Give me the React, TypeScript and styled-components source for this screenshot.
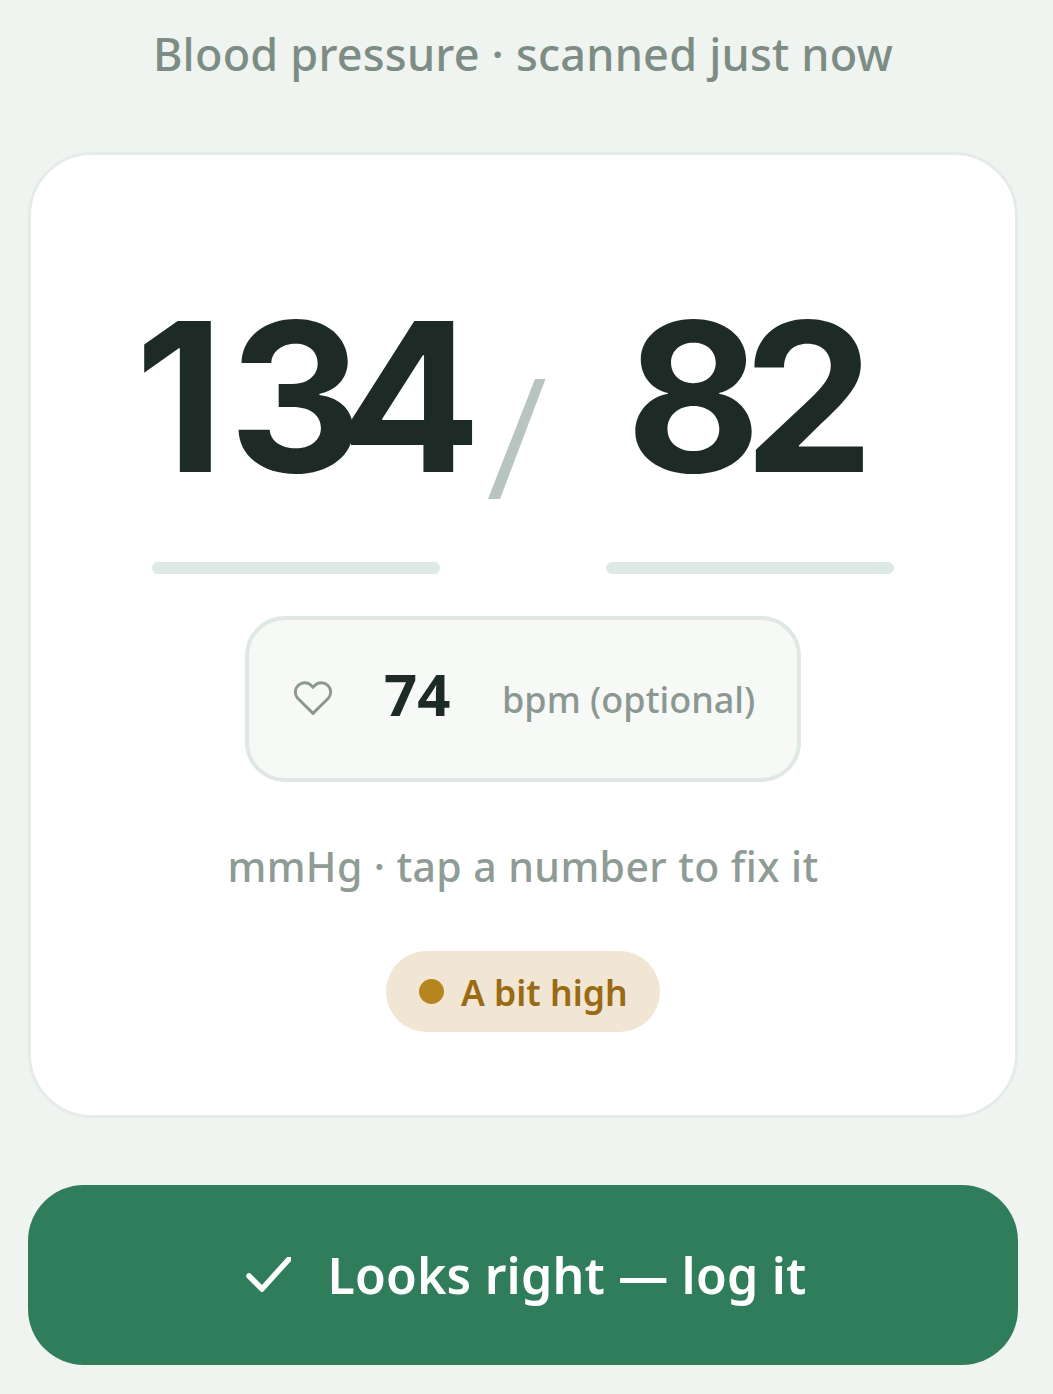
import React from "react";
import styled, { createGlobalStyle } from "styled-components";

const Global = createGlobalStyle`
  html, body { margin: 0; padding: 0; background: #eff4f0; }
  * { box-sizing: border-box; }
`;

const Page = styled.div`
  width: 1053px;
  height: 1394px;
  padding: 0 35px 29px 28px;
  display: flex;
  flex-direction: column;
  overflow: hidden;
  background: #eff4f0;
  font-family: "Noto Sans", "Lato", sans-serif;
`;
const Heading = styled.div`
  height: 109px;
  padding-top: 25px;
  text-align: center;
  font-size: 45px;
  line-height: 58px;
  letter-spacing: 0.2px;
  font-weight: 500;
  color: #7d8c84;
`;
const Card = styled.section`
  margin-top: 43px;
  height: 966px;
  background: #fff;
  border: 3px solid #e5ebe7;
  border-radius: 64px;
  display: flex;
  flex-direction: column;
  align-items: center;
`;
const Numbers = styled.div`
  margin-top: 140px;
  display: flex;
  align-items: flex-start;
  justify-content: center;
`;
const Field = styled.div`
  width: 288px;
  display: flex;
  flex-direction: column;
`;
const Num = styled.span<{ $shift?: number }>`
  height: 267px;
  padding-top: 1px;
  display: flex;
  justify-content: center;
  margin-left: ${(p) => p.$shift ?? 0}px;
  white-space: nowrap;
  font-family: "Inter", "Liberation Sans", sans-serif;
  font-weight: 700;
  font-size: 208px;
  line-height: 200px;
  color: #1d2a25;
`;
const Digit = styled.span<{ $track: number }>`
  letter-spacing: ${(p) => p.$track}px;
`;
const Underline = styled.div`
  width: 288px;
  height: 12px;
  border-radius: 6px;
  background: #dde9e2;
`;
const SlashBox = styled.div`
  width: 166px;
  padding: 84px 0 0 48px;
`;
const Slash = styled.svg`
  display: block;
  width: 58px;
  height: 120px;
`;
const Pulse = styled.div`
  margin-top: 42px;
  width: 556px;
  height: 166px;
  background: #f7f9f7;
  border: 4px solid #dfe8e3;
  border-radius: 40px;
  display: flex;
  align-items: center;
  padding-left: 43px;
`;
const HeartIcon = styled.svg`
  display: block;
  width: 42px;
  height: 38px;
  margin-top: -4px;
`;
const Bpm = styled.span`
  margin-left: 50px;
  width: 118px;
  font-size: 58px;
  line-height: 70px;
  font-weight: 700;
  color: #1d2a25;
  margin-top: -11px;
`;
const BpmLabel = styled.span`
  font-size: 36px;
  font-weight: 500;
  color: #8b9891;
`;
const Hint = styled.div`
  margin-top: 58px;
  font-size: 41px;
  line-height: 52px;
  letter-spacing: 0.4px;
  font-weight: 500;
  color: #8e9c95;
`;
const Badge = styled.div`
  margin-top: 59px;
  height: 81px;
  width: 274px;
  padding-left: 33px;
  border-radius: 41px;
  background: #f0e6d3;
  display: flex;
  align-items: center;
  gap: 17px;
  font-size: 35.500px;
  font-weight: 600;
  color: #9a6a14;
`;
const Dot = styled.span`
  width: 25px;
  height: 25px;
  border-radius: 50%;
  background: #b5861f;
`;
const Action = styled.button`
  margin-top: 67px;
  width: 990px;
  height: 180px;
  padding: 0 0 0 6px;
  border: 0;
  border-radius: 56px;
  background: #2f7d5b;
  color: #fff;
  display: flex;
  align-items: center;
  justify-content: center;
  gap: 36px;
  font-family: inherit;
  font-size: 50px;
  letter-spacing: 0.2px;
  font-weight: 600;
`;

export default function App() {
  return (
    <Page>
      <Global />
      <Heading>Blood pressure · scanned just now</Heading>
      <Card>
        <Numbers>
          <Field>
            <Num $shift={24}>
              <Digit $track={4}>1</Digit>
              <Digit $track={-22}>3</Digit>
              <Digit $track={0}>4</Digit>
            </Num>
            <Underline />
          </Field>
          <SlashBox>
            <Slash viewBox="0 0 58 120">
              <path d="M47 0h10.500L12 120H0z" fill="#b8c5bf" />
            </Slash>
          </SlashBox>
          <Field>
            <Num>
              <Digit $track={-18}>8</Digit>
              <Digit $track={0}>2</Digit>
            </Num>
            <Underline />
          </Field>
        </Numbers>
        <Pulse>
          <HeartIcon viewBox="0 0 24 22" fill="none" stroke="#8b9891" strokeWidth="1.7" strokeLinejoin="round">
            <path d="M12 20.500 3 11.600A5.400 5.400 0 0 1 10.600 4L12 5.400 13.400 4A5.400 5.400 0 0 1 21 11.600Z" />
          </HeartIcon>
          <Bpm>74</Bpm>
          <BpmLabel>bpm (optional)</BpmLabel>
        </Pulse>
        <Hint>mmHg · tap a number to fix it</Hint>
        <Badge>
          <Dot />
          A bit high
        </Badge>
      </Card>
      <Action>
        <svg width="46" height="36" viewBox="0 0 46 36" fill="none" stroke="#fff" strokeWidth="5.500" strokeLinecap="round" strokeLinejoin="round">
          <path d="M4 19 17 32 44 2" />
        </svg>
        Looks right — log it
      </Action>
    </Page>
  );
}
